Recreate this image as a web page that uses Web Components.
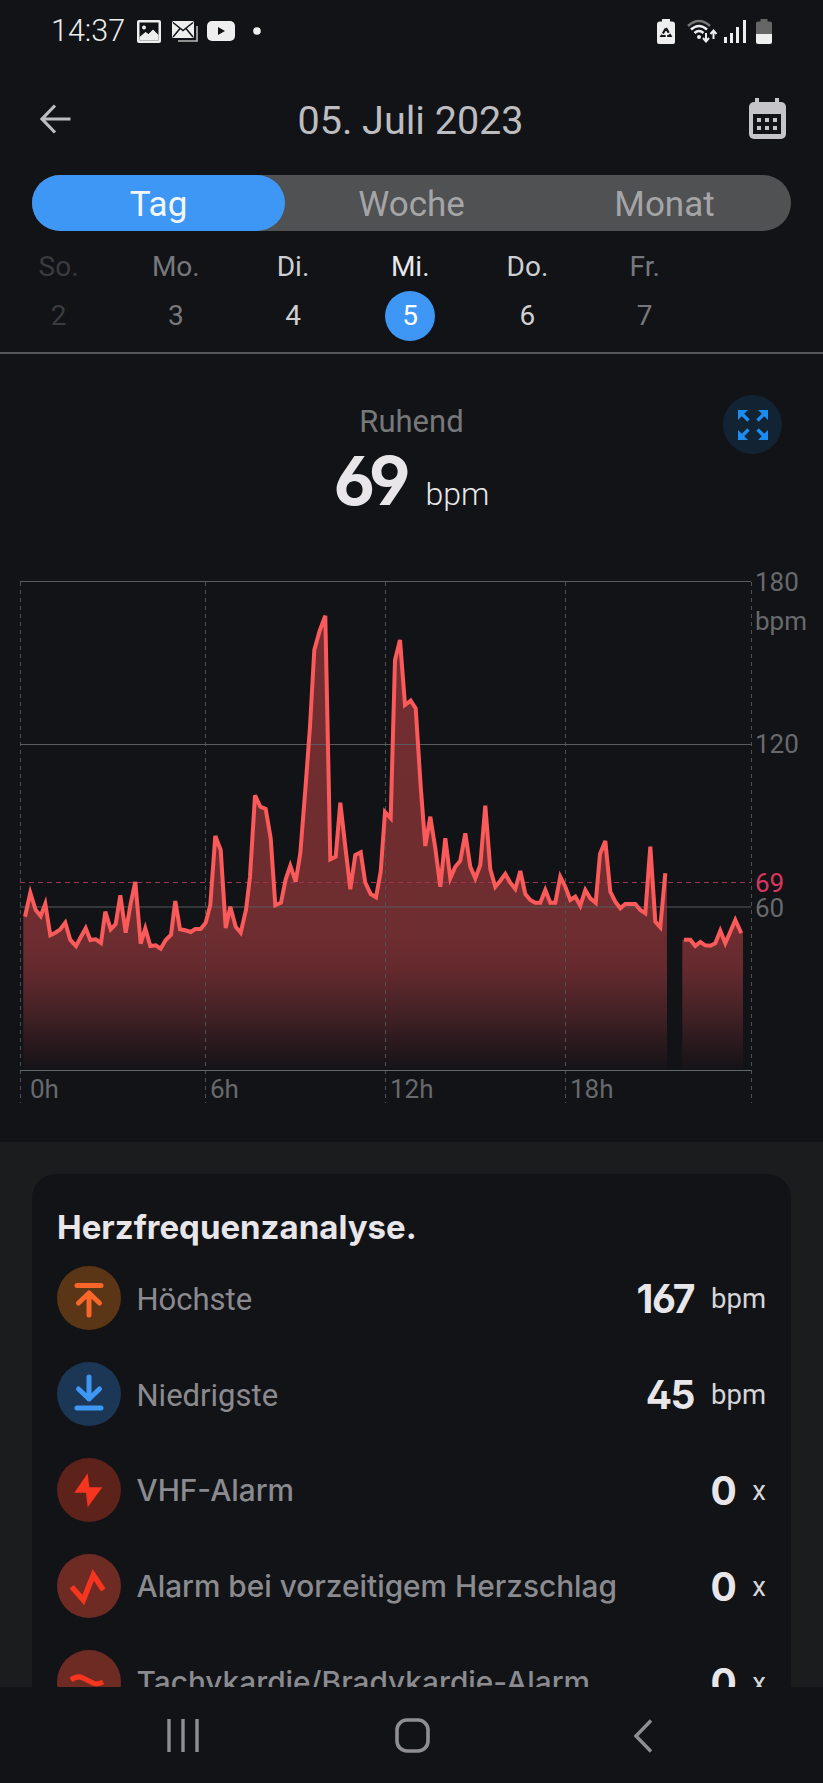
<!DOCTYPE html>
<html lang="de">
<head>
<meta charset="utf-8">
<title>Herzfrequenz</title>
<style>
  html, body { margin: 0; padding: 0; background: #111317; }
  body { font-family: Roboto, "Liberation Sans", sans-serif; }
</style>
</head>
<body>
<hr-app>
  <status-bar slot="top" time="14:37"></status-bar>
  <date-header slot="top" date="05. Juli 2023"></date-header>
  <range-tabs slot="top" items="Tag,Woche,Monat"></range-tabs>
  <week-strip slot="top"></week-strip>
  <hr-summary label="Ruhend" value="69" unit="bpm"></hr-summary>
  <hr-chart></hr-chart>
  <analysis-card heading="Herzfrequenzanalyse.">
    <analysis-row icon="up" label="Höchste" value="167" unit="bpm"></analysis-row>
    <analysis-row icon="down" label="Niedrigste" value="45" unit="bpm"></analysis-row>
    <analysis-row icon="bolt" wide label="VHF-Alarm" value="0" unit="x"></analysis-row>
    <analysis-row icon="zigzag" wide label="Alarm bei vorzeitigem Herzschlag" value="0" unit="x"></analysis-row>
    <analysis-row icon="wave" wide label="Tachykardie/Bradykardie-Alarm" value="0" unit="x"></analysis-row>
  </analysis-card>
  <nav-bar slot="bottom"></nav-bar>
</hr-app>

<script>
class HrApp extends HTMLElement {
  constructor() {
    super();
    this.attachShadow({ mode: "open" });
  }
  connectedCallback() {
    this.shadowRoot.innerHTML = `
      <style>
        :host { display: flex; flex-direction: column; width: 823px; height: 1783px; overflow: hidden; background: #111317; }
        main { flex: 1; min-height: 0; overflow: hidden; }
      </style>
      <slot name="top"></slot>
      <main><slot></slot></main>
      <slot name="bottom"></slot>
    `;
  }
}

class StatusBar extends HTMLElement {
  constructor() {
    super();
    this.attachShadow({ mode: "open" });
  }
  connectedCallback() {
    this.shadowRoot.innerHTML = `
      <style>
        :host { display: flex; align-items: center; height: 62px; padding: 0 51px 0 51px; color: #eee; }
        .time { font-size: 30.5px; font-weight: 300; width: 86px; line-height: 62px; }
        .left { display: flex; align-items: center; gap: 11px; flex: 1; }
        .right { display: flex; align-items: center; }
        svg { display: block; }
      </style>
      <span class="time">${this.getAttribute("time")}</span>
      <div class="left">
        <svg width="24" height="23" viewBox="0 0 24 23">
          <rect width="24" height="23" rx="2" fill="#eee"/>
          <rect x="2.5" y="2.5" width="19" height="18" fill="#111317"/>
          <circle cx="7" cy="7.5" r="2" fill="#eee"/>
          <path d="M2.5 17 L8.5 12 L11.5 14 L16 9.5 L21.5 15 V20.5 H2.5Z" fill="#eee"/>
        </svg>
        <svg width="26" height="21" viewBox="0 0 26 21">
          <path d="M25 5 V20 H6" fill="none" stroke="#bbb" stroke-width="1.6"/>
          <rect x="0" y="0" width="22" height="17" rx="1.5" fill="#eee"/>
          <path d="M1 1.5 L11 9.5 L21 1.5 M1 16 L8 7.5 M21 16 L14 7.5" fill="none" stroke="#111317" stroke-width="1.5"/>
        </svg>
        <svg width="28" height="20" viewBox="0 0 28 20" style="margin-left:-2px">
          <rect width="28" height="20" rx="5" fill="#eee"/>
          <path d="M11 6 L18 10 L11 14Z" fill="#111317"/>
        </svg>
        <svg width="8" height="8" viewBox="0 0 8 8" style="margin-left:7px"><circle cx="4" cy="4" r="3.8" fill="#eee"/></svg>
      </div>
      <div class="right">
        <svg width="18" height="25" viewBox="0 0 18 25">
          <path d="M5 0 H13 V2.5 H15 Q18 2.5 18 5.5 V23 Q18 25 16 25 H2 Q0 25 0 23 V5.5 Q0 2.5 3 2.5 H5Z" fill="#eee"/>
          <path d="M9 9 L13.5 17 H4.5Z" fill="none" stroke="#111317" stroke-width="2.2" stroke-dasharray="5.5 1.5"/>
        </svg>
        <svg width="30" height="24" viewBox="0 0 30 24" style="margin-left:12px">
          <path d="M1 7 Q12 -3 23 7" fill="none" stroke="#777" stroke-width="2.6"/>
          <path d="M4 10.5 Q12 3.5 20 10.5" fill="none" stroke="#eee" stroke-width="2.6"/>
          <path d="M7.5 14 Q12 10 16.5 14" fill="none" stroke="#eee" stroke-width="2.6"/>
          <circle cx="12" cy="18" r="2" fill="#eee"/>
          <path d="M19 14 V22 M16 19 L19 22.5 L22 19" fill="none" stroke="#eee" stroke-width="2"/>
          <path d="M26.5 20 V12 M23.5 15 L26.5 11.5 L29.5 15" fill="none" stroke="#eee" stroke-width="2"/>
        </svg>
        <svg width="22" height="23" viewBox="0 0 22 23" style="margin-left:7px">
          <rect x="0" y="17" width="3" height="6" fill="#eee"/>
          <rect x="6" y="13" width="3" height="10" fill="#eee"/>
          <rect x="12" y="7" width="3" height="16" fill="#eee"/>
          <rect x="19" y="0" width="3" height="23" fill="#eee"/>
        </svg>
        <svg width="16" height="25" viewBox="0 0 16 25" style="margin-left:10px">
          <path d="M4.5 0 H11.5 V2.5 H14 Q16 2.5 16 4.5 V15 H0 V4.5 Q0 2.5 2 2.5 H4.5Z" fill="#666"/>
          <path d="M0 15 H16 V23 Q16 25 14 25 H2 Q0 25 0 23Z" fill="#eee"/>
        </svg>
      </div>
    `;
  }
}

class DateHeader extends HTMLElement {
  constructor() {
    super();
    this.attachShadow({ mode: "open" });
  }
  connectedCallback() {
    this.shadowRoot.innerHTML = `
      <style>
        :host { display: flex; align-items: center; justify-content: space-between; height: 113px; padding: 0 37px 0 40px; color: #bdbdc0; }
        h1 { margin: 0; padding-top: 4px; font-size: 39.5px; font-weight: 400; line-height: 113px; }
        svg { display: block; }
      </style>
      <svg width="32" height="30" viewBox="0 0 32 30">
        <path d="M30.5 15 H3 M15 1.5 L2 15 L15 28.5" fill="none" stroke="#bdbdc0" stroke-width="3.2"/>
      </svg>
      <h1>${this.getAttribute("date")}</h1>
      <svg width="37" height="41" viewBox="0 0 37 41">
        <rect x="6" y="0" width="4" height="8" fill="#c5c5c9"/>
        <rect x="26" y="0" width="4" height="8" fill="#c5c5c9"/>
        <rect x="0" y="4" width="37" height="37" rx="5" fill="#c5c5c9"/>
        <rect x="4" y="16" width="28" height="20" fill="#111317"/>
        <g fill="#c5c5c9">
          <rect x="8" y="20" width="4" height="4"/><rect x="16" y="20" width="4" height="4"/><rect x="24" y="20" width="4" height="4"/>
          <rect x="8" y="28" width="4" height="4"/><rect x="16" y="28" width="4" height="4"/><rect x="24" y="28" width="4" height="4"/>
        </g>
      </svg>
    `;
  }
}

class RangeTabs extends HTMLElement {
  constructor() {
    super();
    this.attachShadow({ mode: "open" });
  }
  connectedCallback() {
    const items = this.getAttribute("items").split(",");
    this.shadowRoot.innerHTML = `
      <style>
        :host { display: grid; grid-template-columns: repeat(3, 1fr); height: 56px; margin: 0 32px; border-radius: 28px; background: #505153; }
        span { display: flex; align-items: center; justify-content: center; padding-top: 2px; font-size: 35px; color: #a5a5a7; border-radius: 28px; }
        .on { background: #3f97f5; color: #f2f6fb; }
      </style>
      ${items.map((t, i) => `<span class="${i === 0 ? "on" : ""}">${t}</span>`).join("")}
    `;
  }
}

class WeekStrip extends HTMLElement {
  constructor() {
    super();
    this.attachShadow({ mode: "open" });
  }
  connectedCallback() {
    const days = [
      ["So.", "2", "#3a3b3e"], ["Mo.", "3", "#77787b"], ["Di.", "4", "#cfcfd1"],
      ["Mi.", "5", "#e8e8ea"], ["Do.", "6", "#cfcfd1"], ["Fr.", "7", "#77787b"], ["", "", ""]
    ];
    this.shadowRoot.innerHTML = `
      <style>
        :host { display: grid; grid-template-columns: repeat(7, 1fr); height: 121px; padding-right: 2.5px; border-bottom: 2px solid #56575a; font-size: 28px; text-align: center; }
        .d { display: flex; flex-direction: column; align-items: center; }
        .n { height: 35px; line-height: 35px; margin-top: 18px; }
        .v { width: 50px; height: 50px; line-height: 50px; margin-top: 7px; border-radius: 50%; }
        .sel { background: #3f97f5; color: #fff; }
      </style>
      ${days.map(d => `
        <div class="d" style="color:${d[2]}">
          <div class="n">${d[0]}</div>
          <div class="v ${d[1] === "5" ? "sel" : ""}">${d[1]}</div>
        </div>`).join("")}
    `;
  }
}

class HrSummary extends HTMLElement {
  constructor() {
    super();
    this.attachShadow({ mode: "open" });
  }
  connectedCallback() {
    this.shadowRoot.innerHTML = `
      <style>
        :host { display: block; position: relative; height: 206px; text-align: center; }
        .label { padding-top: 49px; font-size: 31px; line-height: 38px; color: #77787a; }
        .reading { display: flex; justify-content: center; align-items: baseline; gap: 20px; margin-top: 1px; color: #e8e6e9; line-height: 76px; }
        .value { font-family: Inter, sans-serif; font-feature-settings: "ss01"; font-size: 68px; font-weight: 700; letter-spacing: -5px; }
        .unit { font-size: 32px; font-weight: 300; }
        button { position: absolute; top: 41px; right: 41px; width: 59px; height: 59px; padding: 0; border: 0; border-radius: 50%; background: #122333; display: flex; align-items: center; justify-content: center; }
        svg { display: block; }
      </style>
      <div class="label">${this.getAttribute("label")}</div>
      <div class="reading"><span class="value">${this.getAttribute("value")}</span><span class="unit">${this.getAttribute("unit")}</span></div>
      <button aria-label="Vollbild">
        <svg width="30" height="30" viewBox="0 0 30 30">
          <g id="a" fill="#1c8cf0" stroke="#1c8cf0">
            <path d="M0 0 H10 L0 10Z" stroke="none"/>
            <path d="M3 3 L10.5 10.5" stroke-width="3.4" fill="none"/>
          </g>
          <use href="#a" transform="matrix(-1 0 0 1 30 0)"/>
          <use href="#a" transform="matrix(1 0 0 -1 0 30)"/>
          <use href="#a" transform="matrix(-1 0 0 -1 30 30)"/>
        </svg>
      </button>
    `;
  }
}

// punkte aus dem screenshot, 3x-raster (x/3, 600+y/3)
const HR_DAY = [
  [75,950],[91,878],[107,930],[122,948],[136,911],[151,1006],[166,998],[181,988],[196,968],[211,1020],[228,1038],[242,1012],
  [257,985],[271,1020],[287,1018],[303,1029],[316,935],[332,988],[347,972],[361,886],[377,998],[392,910],[406,846],[422,1031],
  [436,985],[451,1038],[467,1036],[482,1046],[497,1020],[513,1004],[526,903],[540,988],[556,991],[572,996],[586,987],[602,987],
  [617,968],[631,915],[646,708],[662,750],[677,984],[691,920],[707,980],[722,998],[738,930],[750,830],[765,586],[781,620],
  [797,627],[812,715],[826,916],[843,908],[857,838],[871,797],[887,845],[901,760],[916,570],[930,380],[943,150],[959,92],
  [976,47],[991,778],[1007,770],[1021,608],[1037,750],[1051,868],[1066,765],[1082,757],[1096,848],[1112,882],[1128,892],
  [1142,815],[1155,636],[1172,655],[1185,180],[1200,120],[1215,315],[1232,302],[1247,325],[1262,560],[1276,738],[1291,650],
  [1306,745],[1321,860],[1336,715],[1351,835],[1366,800],[1381,782],[1396,700],[1411,800],[1426,835],[1441,795],[1456,617],
  [1471,808],[1486,860],[1501,842],[1516,822],[1531,848],[1546,867],[1561,813],[1576,882],[1591,900],[1606,908],[1621,908],
  [1636,870],[1651,908],[1666,908],[1681,830],[1696,860],[1711,900],[1726,890],[1741,917],[1756,870],[1771,895],[1787,908],
  [1800,762],[1816,723],[1831,875],[1846,905],[1861,925],[1876,912],[1891,912],[1906,912],[1921,930],[1936,940],[1951,740],
  [1966,965],[1981,982],[1996,820]
];
const HR_LATE = [
  [2052,1019],[2071,1019],[2086,1038],[2101,1026],[2116,1036],[2131,1037],[2146,1030],[2161,992],[2176,1030],[2191,995],[2206,960],[2224,1000]
];

class HrChart extends HTMLElement {
  constructor() {
    super();
    this.attachShadow({ mode: "open" });
  }
  // svg beginnt bei y=560 der seite
  toPoints(list) {
    return list.map(p => `${(p[0] / 3).toFixed(1)},${(40 + p[1] / 3).toFixed(1)}`);
  }
  area(list, bottom) {
    const pts = this.toPoints(list);
    const start = pts[0].split(",");
    const end = pts[pts.length - 1].split(",");
    const x0 = (+start[0] - 1.7).toFixed(1);
    const x1 = (+end[0] + 1.7).toFixed(1);
    return `M${x0},${bottom} L${x0},${start[1]} L${pts.join(" L")} L${x1},${end[1]} L${x1},${bottom}Z`;
  }
  connectedCallback() {
    const bottom = 508;
    const vLines = [20.5, 205.5, 385.5, 565.5, 751.5];
    const hLines = [21.5, 184.5, 347];
    const hours = [["0h", 30], ["6h", 210], ["12h", 390], ["18h", 570]];
    this.shadowRoot.innerHTML = `
      <style>
        :host { display: block; height: 582px; }
        svg { display: block; }
        text { font-family: Roboto, sans-serif; font-size: 26px; fill: #68696c; }
      </style>
      <svg width="823" height="582" viewBox="0 0 823 582">
        <defs>
          <linearGradient id="fade" gradientUnits="userSpaceOnUse" x1="0" y1="10" x2="0" y2="${bottom}">
            <stop offset="0" stop-color="#732d30"/>
            <stop offset=".73" stop-color="#6e2d30"/>
            <stop offset=".8" stop-color="#652a2e"/>
            <stop offset=".9" stop-color="#3f2024"/>
            <stop offset=".98" stop-color="#1e1519"/>
            <stop offset="1" stop-color="#15141a"/>
          </linearGradient>
        </defs>
        <path d="${this.area(HR_DAY, bottom)}" fill="url(#fade)"/>
        <path d="${this.area(HR_LATE, bottom)}" fill="url(#fade)"/>
        ${vLines.map(x => `<line x1="${x}" y1="22" x2="${x}" y2="543" stroke="#505154" stroke-width="1" stroke-dasharray="4 4"/>`).join("")}
        ${hLines.map(y => `<line x1="20" y1="${y}" x2="751" y2="${y}" stroke="#5a5b5e" stroke-width="1"/>`).join("")}
        <line x1="20" y1="510.5" x2="751" y2="510.5" stroke="#66676a" stroke-width="1"/>
        <line x1="20" y1="322.5" x2="751" y2="322.5" stroke="#9c3550" stroke-width="1" stroke-dasharray="5 4"/>
        <polyline points="${this.toPoints(HR_DAY).join(" ")}" fill="none" stroke="#fb5a5a" stroke-width="4"/>
        <polyline points="${this.toPoints(HR_LATE).join(" ")}" fill="none" stroke="#fb5a5a" stroke-width="4"/>
        <text x="755" y="31">180</text>
        <text x="755" y="70">bpm</text>
        <text x="755" y="193">120</text>
        <text x="755" y="332" style="fill:#d8365f">69</text>
        <text x="755" y="357">60</text>
        ${hours.map(h => `<text x="${h[1]}" y="538">${h[0]}</text>`).join("")}
      </svg>
    `;
  }
}

class AnalysisCard extends HTMLElement {
  constructor() {
    super();
    this.attachShadow({ mode: "open" });
  }
  connectedCallback() {
    this.shadowRoot.innerHTML = `
      <style>
        :host { display: block; padding: 32px 32px 40px; background: #1b1c1e; }
        .card { padding: 0 25px 24px; border-radius: 24px; background: #111317; }
        h2 { margin: 0; padding: 29px 0 0; height: 47px; font-family: Inter, sans-serif; font-size: 33px; font-weight: 700; line-height: 48px; color: #e8e6e9; }
      </style>
      <div class="card">
        <h2>${this.getAttribute("heading")}</h2>
        <slot></slot>
      </div>
    `;
  }
}

const ROW_ICONS = {
  up: { bg: "#5a3516", fg: "#f9662a", svg: `<path d="M20 19.5 H44 M32 49 V27 M21.5 37 L32 27 L42.5 37" fill="none" stroke="currentColor" stroke-width="5" stroke-linecap="round" stroke-linejoin="round"/>` },
  down: { bg: "#1c3655", fg: "#3f97f5", svg: `<path d="M20 46 H44 M32 15 V37 M21.5 27 L32 37 L42.5 27" fill="none" stroke="currentColor" stroke-width="5" stroke-linecap="round" stroke-linejoin="round"/>` },
  bolt: { bg: "#5d2219", fg: "#f5351f", svg: `<path d="M30.7 15.3 L17.3 34.7 H29 L30.7 49.3 L45.3 29.3 H32.3Z" fill="currentColor"/>` },
  zigzag: { bg: "#6e2b23", fg: "#f5351f", svg: `<path d="M14.7 32.7 L26.3 46 L36.3 21 L46.3 36" fill="none" stroke="currentColor" stroke-width="5.5"/>` },
  wave: { bg: "#6e2b23", fg: "#f5351f", svg: `<path d="M14 30 Q20 25 26 28 T36 33 T46 32" fill="none" stroke="currentColor" stroke-width="5"/>` }
};

class AnalysisRow extends HTMLElement {
  constructor() {
    super();
    this.attachShadow({ mode: "open" });
  }
  connectedCallback() {
    const icon = ROW_ICONS[this.getAttribute("icon")];
    this.shadowRoot.innerHTML = `
      <style>
        :host { display: flex; align-items: center; height: 96px; }
        svg { flex: none; width: 64px; height: 64px; border-radius: 50%; display: block; }
        .label { flex: 1; margin-left: 15.5px; padding-top: 2px; font-size: 31px; color: #8b8b8f; white-space: nowrap; }
        .label.wide { padding-top: 0; font-family: Inter, sans-serif; font-size: 29.8px; font-weight: 500; }
        .value { font-family: Inter, sans-serif; font-feature-settings: "ss01"; font-size: 39px; font-weight: 700; letter-spacing: -1.5px; color: #e8e6e9; }
        .unit { margin-left: 17px; font-size: 27.5px; color: #d5d5d8; }
      </style>
      <svg viewBox="0 0 64 64" style="background:${icon.bg};color:${icon.fg}">${icon.svg}</svg>
      <span class="label ${this.hasAttribute("wide") ? "wide" : ""}">${this.getAttribute("label")}</span>
      <span class="value">${this.getAttribute("value")}</span>
      <span class="unit">${this.getAttribute("unit")}</span>
    `;
  }
}

class NavBar extends HTMLElement {
  constructor() {
    super();
    this.attachShadow({ mode: "open" });
  }
  connectedCallback() {
    this.shadowRoot.innerHTML = `
      <style>
        :host { display: grid; grid-template-columns: repeat(3, 230px); height: 96px; flex: none; padding-left: 67.5px; background: #111317; }
        div { display: flex; align-items: center; justify-content: center; padding-top: 1px; }
        svg { display: block; }
      </style>
      <div><svg width="32" height="33" viewBox="0 0 32 33" fill="none" stroke="#8f8f92" stroke-width="3.4">
        <path d="M2 0 V33 M16 0 V33 M30 0 V33"/></svg></div>
      <div><svg width="35" height="35" viewBox="0 0 35 35"><rect x="2" y="2" width="31" height="31" rx="10" fill="none" stroke="#8f8f92" stroke-width="3.6"/></svg></div>
      <div><svg width="20" height="34" viewBox="0 0 20 34"><path d="M18 1.5 L3 17 L18 32.5" fill="none" stroke="#8f8f92" stroke-width="3.4"/></svg></div>
    `;
  }
}

customElements.define("hr-app", HrApp);
customElements.define("status-bar", StatusBar);
customElements.define("date-header", DateHeader);
customElements.define("range-tabs", RangeTabs);
customElements.define("week-strip", WeekStrip);
customElements.define("hr-summary", HrSummary);
customElements.define("hr-chart", HrChart);
customElements.define("analysis-card", AnalysisCard);
customElements.define("analysis-row", AnalysisRow);
customElements.define("nav-bar", NavBar);
</script>
</body>
</html>
